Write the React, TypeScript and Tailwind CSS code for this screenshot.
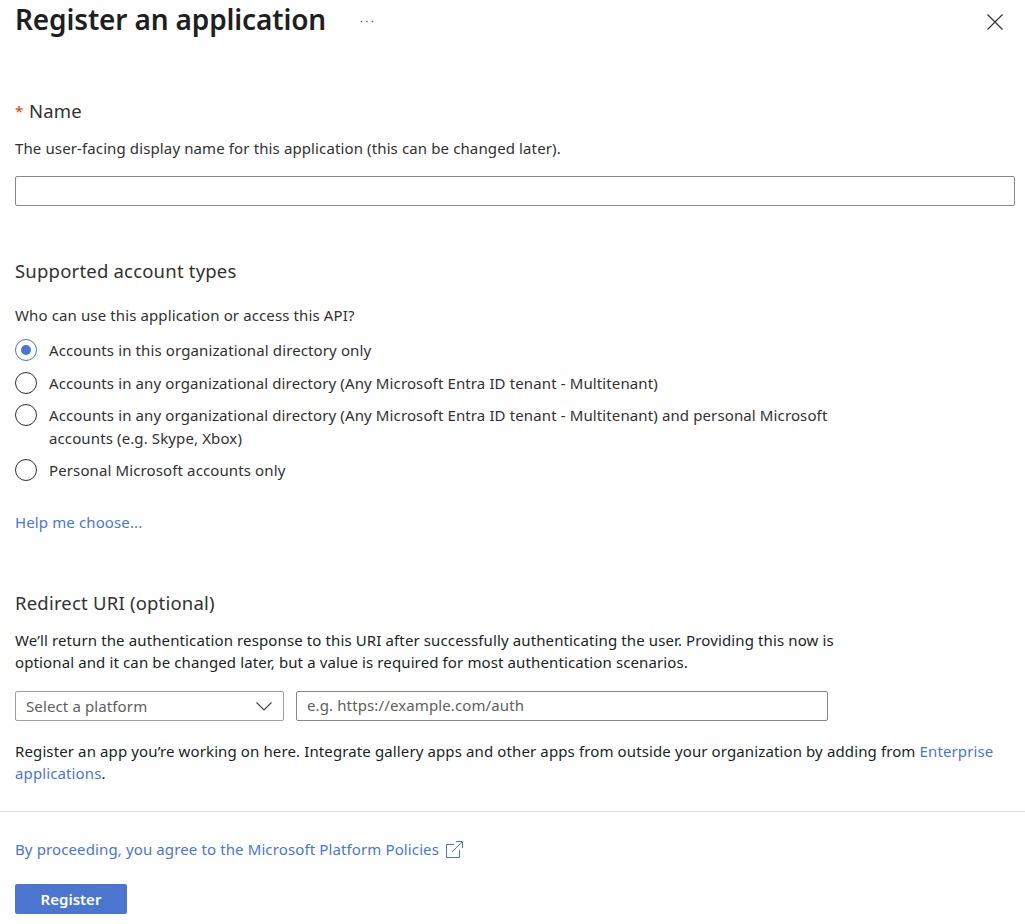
function Radio({ checked, label }: { checked?: boolean; label: string }) {
  return (
    <div className="flex items-start">
      <span
        className={`flex h-[22px] w-[22px] shrink-0 items-center justify-center rounded-full border-[1.5px] bg-white ${
          checked ? 'border-[#4a76d0]' : 'border-[#323130]'
        }`}
      >
        {checked && <span className="h-[10px] w-[10px] rounded-full bg-[#4a76d0]" />}
      </span>
      <span className="ml-[12px] w-[800px] leading-[22.5px] text-[#323130]">{label}</span>
    </div>
  );
}

export default function App() {
  return (
    <div className="h-[924px] w-full overflow-hidden bg-white font-['Noto_Sans',sans-serif] text-[15px] tracking-[0.12px] text-[#201f1e]">
      {/* Header */}
      <div className="flex h-[40px] items-center pl-[15px] pr-[22px]">
        <h1 className="mb-[2px] text-[28px] leading-[40px] font-semibold tracking-[-0.15px] text-[#1f1f1f]">Register an application</h1>
        <svg className="ml-[34px] mt-[2px]" width="14" height="3" viewBox="0 0 14 3" fill="#555">
          <circle cx="1.5" cy="1.5" r="0.8" />
          <circle cx="7" cy="1.5" r="0.8" />
          <circle cx="12.5" cy="1.5" r="0.8" />
        </svg>
        <svg className="ml-auto mt-[3px]" width="16" height="16" viewBox="0 0 16 16" fill="none" stroke="#333" strokeWidth="1.2">
          <path d="M0.5 0.5L15.5 15.5M15.5 0.5L0.5 15.5" />
        </svg>
      </div>

      <div className="px-[15px]">
        <div className="mt-[58px] flex text-[18.5px] leading-[26px] tracking-[0.2px] text-[#323130]">
          <span className="w-[14px] text-[15px] text-[#d83b01]">*</span>Name
        </div>
        <p className="mt-[14px] leading-[20px] text-[#323130]">
          The user-facing display name for this application (this can be changed later).
        </p>
        <input className="mt-[18px] block h-[30px] w-[1000px] rounded-[2px] border border-[#8a8886] bg-white" />

        <h2 className="mt-[52px] text-[18.5px] leading-[26px] tracking-[0.2px] text-[#323130]">Supported account types</h2>
        <p className="mt-[21px] leading-[20px] text-[#323130]">Who can use this application or access this API?</p>

        <div className="mt-[14px] flex flex-col gap-[10px]">
          <Radio checked label="Accounts in this organizational directory only" />
          <Radio label="Accounts in any organizational directory (Any Microsoft Entra ID tenant - Multitenant)" />
          <Radio label="Accounts in any organizational directory (Any Microsoft Entra ID tenant - Multitenant) and personal Microsoft accounts (e.g. Skype, Xbox)" />
          <Radio label="Personal Microsoft accounts only" />
        </div>

        <a className="mt-[30.5px] block leading-[20px] text-[#4a76d0]">Help me choose...</a>

        <h2 className="mt-[58px] text-[18.5px] leading-[26px] tracking-[0.2px] text-[#323130]">Redirect URI (optional)</h2>
        <p className="mt-[13px] w-[830px] leading-[22px]">
          We’ll return the authentication response to this URI after successfully authenticating the user. Providing this now is optional and it can be changed later, but a value is required for most authentication scenarios.
        </p>

        <div className="mt-[18px] flex gap-[12px]">
          <div className="flex h-[30px] w-[269px] items-center justify-between rounded-[2px] border border-[#a19f9d] pl-[10px] pr-[11px] text-[#605e5c]">
            Select a platform
            <svg width="16" height="9" viewBox="0 0 16 9" fill="none" stroke="#444" strokeWidth="1.2">
              <path d="M0.5 0.5L8 8L15.5 0.5" />
            </svg>
          </div>
          <div className="flex h-[30px] w-[532px] items-center rounded-[2px] border border-[#8a8886] pb-[2px] pl-[10px] text-[#605e5c]">
            e.g. https://example.com/auth
          </div>
        </div>

        <p className="mt-[19px] leading-[22px]">
          Register an app you’re working on here. Integrate gallery apps and other apps from outside your organization by adding from <a className="text-[#4a76d0]">Enterprise applications</a>.
        </p>
      </div>

      <div className="mt-[27px] border-t border-[#e1dfdd]" />

      {/* Footer */}
      <div className="px-[15px]">
        <a className="mt-[27px] flex items-center leading-[20px] text-[#4a76d0]">
          By proceeding, you agree to the Microsoft Platform Policies
          <svg className="ml-[7px]" width="17" height="17" viewBox="0 0 17 17" fill="none" stroke="#4a76d0" strokeWidth="1">
            <path d="M8 3.5H0.5V16.5H13.5V9" />
            <path d="M6 11L16 1M10 0.5H16.5V7" />
          </svg>
        </a>
        <button className="mt-[25px] h-[30px] w-[112px] rounded-[2px] bg-[#4a76d0] font-semibold tracking-normal text-white">Register</button>
      </div>
    </div>
  );
}
